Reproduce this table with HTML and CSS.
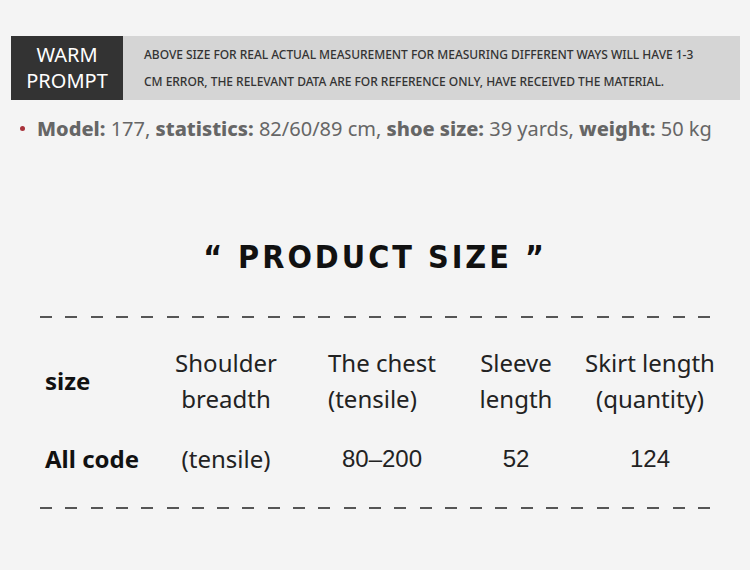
FILE: index.html
```html
<!DOCTYPE html>
<html>
<head>
<meta charset="utf-8">
<link rel="stylesheet" href="styles.css">
</head>
<body>
<div class="page">
  <div class="prompt">
    <div class="prompt-label">WARM<br>PROMPT</div>
    <div class="prompt-text">ABOVE SIZE FOR REAL ACTUAL MEASUREMENT FOR MEASURING DIFFERENT WAYS WILL HAVE 1-3<br>CM ERROR, THE RELEVANT DATA ARE FOR REFERENCE ONLY, HAVE RECEIVED THE MATERIAL.</div>
  </div>
  <div class="model">
    <span class="dot"></span>
    <span><b>Model:</b> 177, <b>statistics:</b> 82/60/89 cm, <b>shoe size:</b> 39 yards, <b>weight:</b> 50 kg</span>
  </div>
  <h1 class="title">“ PRODUCT SIZE ”</h1>
  <div class="dash"></div>
  <div class="table">
    <div class="cell head-first">size</div>
    <div class="cell">Shoulder<br>breadth</div>
    <div class="cell left">The chest<br>(tensile)</div>
    <div class="cell">Sleeve<br>length</div>
    <div class="cell">Skirt length<br>(quantity)</div>
    <div class="cell row-first">All code</div>
    <div class="cell">(tensile)</div>
    <div class="cell num">80–200</div>
    <div class="cell num">52</div>
    <div class="cell num">124</div>
  </div>
  <div class="dash dash-bottom"></div>
</div>
</body>
</html>
```
FILE: styles.css
```css
html, body {
  margin: 0;
  padding: 0;
  background: #f4f4f4;
}
body {
  font-family: "Noto Sans", "DejaVu Sans", sans-serif;
  width: 750px;
  height: 570px;
  overflow: hidden;
}
.page {
  padding-top: 36px;
}
.prompt {
  display: flex;
  margin: 0 10px 0 11px;
  height: 64px;
  background: #d5d5d5;
}
.prompt-label {
  width: 112px;
  background: #333333;
  color: #ffffff;
  font-size: 20px;
  line-height: 26px;
  display: flex;
  align-items: center;
  justify-content: center;
  text-align: center;
}
.prompt-text {
  padding-left: 21px;
  font-size: 12px;
  font-weight: 500;
  line-height: 27px;
  color: #333;
  display: flex;
  align-items: center;
  letter-spacing: -0.03px;
}
.model {
  display: flex;
  align-items: center;
  margin: 12px 0 0 20px;
  font-size: 20px;
  color: #666;
  height: 32px;
}
.model b {
  font-weight: 800;
}
.dot {
  width: 5px;
  height: 5px;
  border-radius: 50%;
  background: #a8323a;
  margin-right: 12px;
}
.title {
  margin: 93px 0 0 0;
  text-align: center;
  font-family: "DejaVu Sans Condensed", "DejaVu Sans", sans-serif;
  font-weight: 700;
  font-size: 32px;
  letter-spacing: 3px;
  color: #111;
  line-height: 40px;
}
.dash {
  margin: 39px 0 0 40px;
  width: 672px;
  height: 2px;
  background: repeating-linear-gradient(to right, #555 0 12px, transparent 12px 25.3px);
}
.table {
  display: grid;
  grid-template-columns: 103px 156px 156px 112px 156px;
  grid-template-rows: 78px 78px;
  margin: 24px 0 0 45px;
  color: #222;
  font-size: 24px;
  line-height: 36px;
}
.cell {
  display: flex;
  align-items: center;
  justify-content: center;
  text-align: center;
}
.cell.left {
  justify-content: flex-start;
  text-align: left;
  padding-left: 24px;
}
.head-first, .row-first {
  justify-content: flex-start;
  font-weight: 700;
  color: #111;
}
.num {
  font-family: "Liberation Sans", Arial, sans-serif;
  font-size: 24px;
}
.dash-bottom {
  margin-top: 9px;
}
```
